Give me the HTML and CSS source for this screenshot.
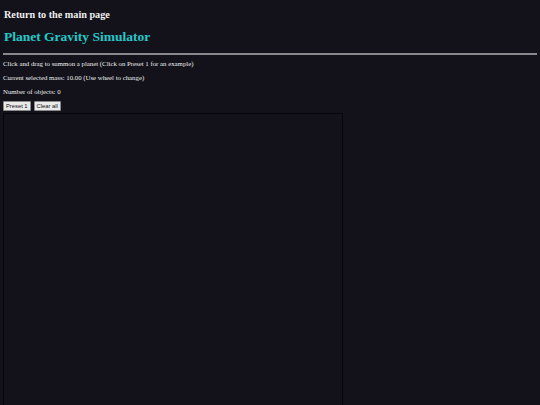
FILE: index.html
```html
<!DOCTYPE html>
<html lang="en">
<head>
    <meta charset="UTF-8">
    <title>Planet Gravity Simulator</title>
    <link rel="stylesheet" href="styles.css">
</head>
<body>

    <!-- Link back -->
    <a class="back-link" href="#">Return to the main page</a>

    <h1 class="title">Planet Gravity Simulator</h1>
    <hr class="divider">

    <p class="info">Click and drag to summon a planet (Click on Preset 1 for an example)</p>
    <p class="info">Current selected mass: <span id="mass">10.00</span> (Use wheel to change)</p>
    <p class="info">Number of objects: <span id="count">0</span></p>

    <div class="controls">
        <button id="preset-btn">Preset 1</button>
        <button id="clear-btn">Clear all</button>
    </div>

    <!-- Simulation area -->
    <div class="sim-canvas"></div>

</body>
</html>
```

FILE: styles.css
```css
body {
    margin: 0;
    padding: 9px 3px 0 3px;
    background-color: #13121b;
    color: #ececec;
    font-family: "Liberation Serif", serif;
    overflow: hidden;
}

.back-link {
    display: block;
    margin-left: 1px;
    color: #efefef;
    text-decoration: none;
    font-weight: bold;
    font-size: 10.2px;
    line-height: 12px;
}

.title {
    margin: 7px 0 0 1px;
    color: #23c9c9;
    font-size: 13.5px;
    line-height: 18px;
}

.divider {
    margin: 7px 0 0 0;
    border: none;
    height: 2px;
    background-color: #8a8a8e;
}

.info {
    margin: 0;
    margin-top: 5px;
    font-size: 6.8px;
    line-height: 8px;
}

.info + .info {
    margin-top: 6px;
}

.controls {
    display: flex;
    gap: 3px;
    margin-top: 5px;
}

button {
    font-family: "Liberation Sans", sans-serif;
    font-size: 5.8px;
    line-height: 8px;
    padding: 0 2px;
    height: 10px;
    background-color: #e9e9e9;
    color: #111;
    border: 1px solid #8a8a8a;
    border-radius: 1px;
}

.sim-canvas {
    width: 338px;
    height: 400px;
    margin-top: 2px;
    border: 1px solid #07070b;
    background-color: #13121b;
}
```
